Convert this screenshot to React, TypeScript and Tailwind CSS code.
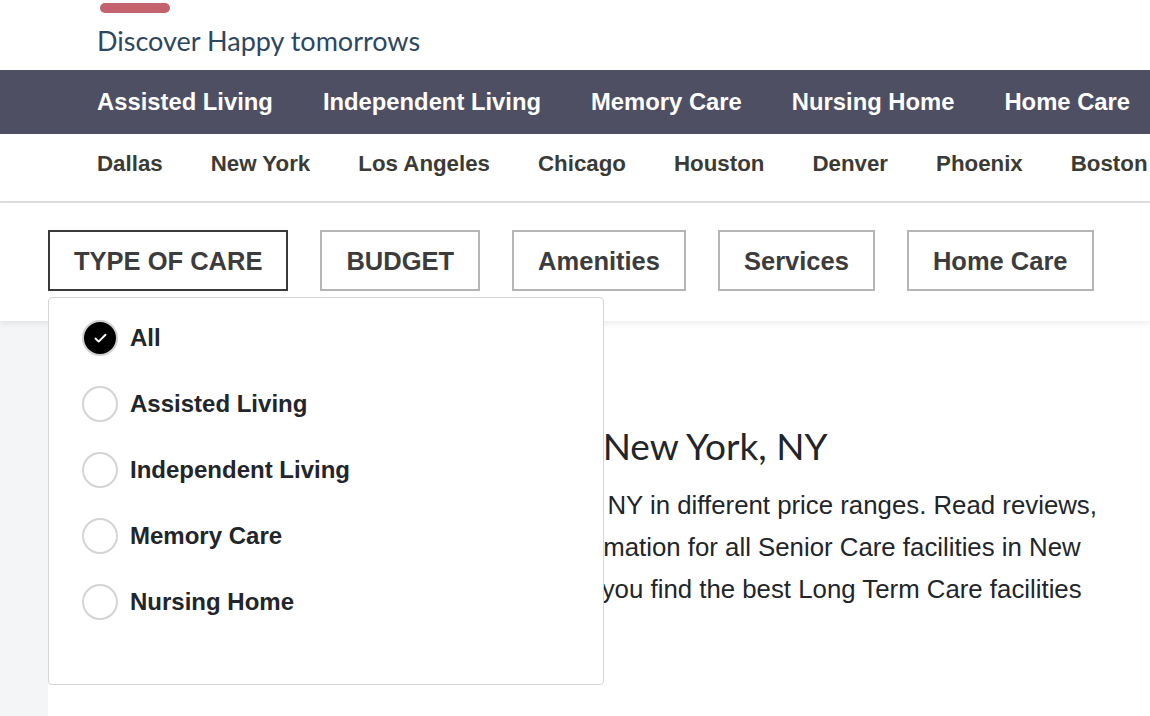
import { Check } from 'lucide-react'

const careTypes = ['Assisted Living', 'Independent Living', 'Memory Care', 'Nursing Home', 'Home Care']
const cities = ['Dallas', 'New York', 'Los Angeles', 'Chicago', 'Houston', 'Denver', 'Phoenix', 'Boston']
const filters = ['TYPE OF CARE', 'BUDGET', 'Amenities', 'Services', 'Home Care']
const options = ['All', 'Assisted Living', 'Independent Living', 'Memory Care', 'Nursing Home']

const arial = "font-['Liberation_Sans',Arial,sans-serif]"

export default function App() {
  return (
    <div className={`relative h-[716px] w-[1150px] overflow-hidden bg-[#f4f5f7] ${arial}`}>
      <header className="h-[70px] bg-white pl-[97px]">
        <div className="h-[3px]" />
        <div className="ml-[3px] h-[10px] w-[70px] rounded-full bg-[#c4636d]" />
        <p className="mt-[13px] font-['Lato',sans-serif] text-[27px] leading-[30px] text-[#2e4760]">
          Discover Happy tomorrows
        </p>
      </header>

      <nav className="flex h-[64px] items-center gap-[50px] overflow-hidden whitespace-nowrap bg-[#4e4f63] pl-[97px]">
        {careTypes.map((c) => (
          <a key={c} className="text-[23.8px] font-bold text-white">
            {c}
          </a>
        ))}
      </nav>

      <div className="flex h-[69px] items-center gap-[48px] overflow-hidden whitespace-nowrap border-b-2 border-[#dedede] bg-white pb-[7px] pl-[97px]">
        {cities.map((c) => (
          <a key={c} className="text-[22.3px] font-bold text-[#3b3b36]">
            {c}
          </a>
        ))}
      </div>

      <div className="relative z-10 flex gap-[32px] bg-white pb-[30px] pl-[48px] pt-[27px] shadow-[0_3px_6px_rgba(0,0,0,0.07)]">
        {filters.map((f, i) => (
          <button
            key={f}
            type="button"
            className={`h-[61px] border-2 px-[24px] pt-[1px] text-[25.5px] font-bold text-[#3c3c3c] ${
              i === 0 ? 'border-[#3a3a3a]' : 'border-[#b5b5b5]'
            }`}
          >
            {f}
          </button>
        ))}
      </div>

      <main className="ml-[48px] h-full bg-white pl-[49px] pt-[103px]">
        <h1 className="whitespace-nowrap font-['Lato',sans-serif] text-[37px] leading-[44px] text-[#222529]">
          Best Assisted Living Centers in  New York, NY
        </h1>
        <p className="mt-[16px] whitespace-nowrap text-[25.8px] leading-[42px] text-[#222529]">
          Compare Senior Living options in New York, NY in different price ranges. Read reviews,
          <br />
          photos, floor plans, pricing, and contact information for all Senior Care facilities in New
          <br />
          York, NY. Our senior care advisors can help you find the best Long Term Care facilities
        </p>
      </main>

      <div className="absolute left-[48px] top-[297px] z-20 h-[388px] w-[556px] rounded-[4px] border border-[#d6d6d6] bg-white pl-[33px] pt-[22px]">
        <ul className="flex flex-col gap-[30px]">
          {options.map((o, i) => (
            <li key={o} className="flex h-[36px] items-center gap-[12px]">
              {i === 0 ? (
                <span className="flex size-[36px] items-center justify-center rounded-full border-2 border-[#cfcfcf] bg-black">
                  <Check className="size-[15px] text-white" strokeWidth={3} />
                </span>
              ) : (
                <span className="size-[36px] rounded-full border-2 border-[#d4d4d4] bg-white" />
              )}
              <span className="text-[24px] font-bold text-[#222529]">{o}</span>
            </li>
          ))}
        </ul>
      </div>
    </div>
  )
}
